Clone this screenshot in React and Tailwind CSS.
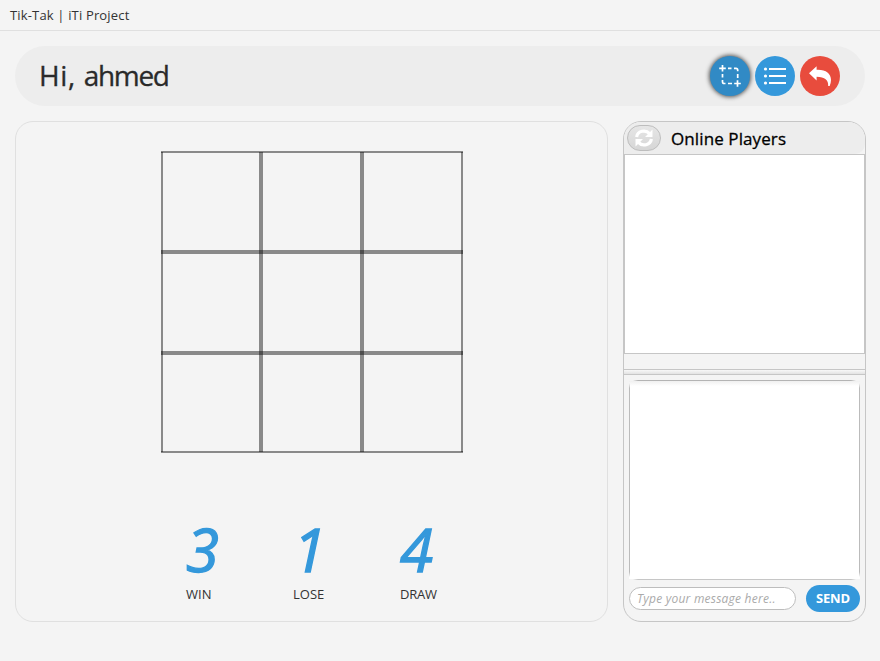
import React from "react";

const FONT = "font-['Trebuchet_MS','Open_Sans','Noto_Sans',sans-serif]";

function Crop() {
  return (
    <svg width="24" height="24" viewBox="0 0 24 24" fill="none" stroke="#fff" strokeWidth="1.7">
      <path d="M4.500 1v6.500M1.200 4.300h6.600M19.500 16.200v6.500M16.200 19.500h6.600" />
      <path d="M10 4.300h3.500M16 4.300h2q1.700 0 1.700 1.700v1.200M19.700 10v4M4.500 10v3.500M4.500 16v1.800q0 1.700 1.700 1.700H7.500M10 19.500h4" />
    </svg>
  );
}

function List() {
  return (
    <svg width="24" height="22" viewBox="0 0 24 22" fill="#fff">
      <circle cx="2.5" cy="4" r="1.6" />
      <circle cx="2.5" cy="11" r="1.6" />
      <circle cx="2.5" cy="18" r="1.6" />
      <path d="M6 3h17v2H6zM6 10h17v2H6zM6 17h17v2H6z" />
    </svg>
  );
}

function Back() {
  return (
    <svg width="24" height="22" viewBox="0 0 24 22" fill="#fff">
      <path d="M1 8.2 8.600 1.200v3.600C17.500 4.300 23 8.500 23 15c0 2-.6 4-1.300 6h-1.500c.3-6-3.200-8.800-11.600-9.200V15.500z" />
    </svg>
  );
}

function Refresh() {
  return (
    <svg width="20" height="20" viewBox="0 0 20 20">
      <g fill="none" stroke="#fff" strokeWidth="3.200">
        <path d="M2.600 9C3.500 3 11.500 1 15.500 5.600" />
        <path d="M17.400 11C16.500 17 8.500 19 4.500 14.400" />
      </g>
      <path d="M18.500 1.500V9H11zM1.500 18.500V11H9z" fill="#fff" />
    </svg>
  );
}

const COLUMNS = [[0, 2], [98, 4], [199, 4], [300, 2]];
const ROWS = [[0, 2], [99, 4], [200, 4], [300, 2]];

function Board() {
  return (
    <svg width="302" height="302" className="block" shapeRendering="crispEdges" fill="#000" fillOpacity=".44">
      {COLUMNS.map(([x, w]) => (
        <rect key={"v" + x} x={x} y="1" width={w} height="300" />
      ))}
      {ROWS.map(([y, h]) => (
        <rect key={"h" + y} x="0" y={y} width="302" height={h} />
      ))}
    </svg>
  );
}

function Stat({ value, label, valueClass, labelClass }) {
  return (
    <div className="flex w-[110px] flex-col items-start">
      <div className={"h-[58px] text-[60px] leading-[58px] italic text-[#3498db] [-webkit-text-stroke:1.3px_#3498db] " + valueClass}>{value}</div>
      <div className={"mt-[7px] text-[13px] leading-[18px] whitespace-nowrap text-[#333] " + labelClass}>{label}</div>
    </div>
  );
}

export default function App() {
  return (
    <div className={"h-[661px] w-[880px] overflow-hidden bg-[#f4f4f4] " + FONT}>
      <div className="h-[31px] border-b border-[#e0e0e0] pl-[10px] text-[13px] leading-[31px] tracking-[0.16px] text-[#333]">
        Tik-Tak | iTi Project
      </div>
      <header className="mx-[15px] mt-[15px] flex h-[60px] items-center justify-between rounded-[30px] bg-[#ededed] pr-[25px] pl-[24px]">
        <h1 className="h-[60px] text-[28px] leading-[59px] text-[#2a2a2a] [-webkit-text-stroke:0.3px_#2a2a2a]">
          <span className="tracking-[0.6px]">Hi, </span>
          <span className="tracking-[-1.3px]">ahmed</span>
        </h1>
        <div className="flex items-center gap-[5px]">
          <button className="flex size-[40px] items-center justify-center rounded-full bg-[#318ac5] shadow-[0_0_4px_1px_#555]">
            <Crop />
          </button>
          <button className="flex size-[40px] items-center justify-center rounded-full bg-[#3498db]">
            <List />
          </button>
          <button className="flex size-[40px] items-center justify-center rounded-full bg-[#e84c3d]">
            <Back />
          </button>
        </div>
      </header>
      <main className="mt-[15px] ml-[15px] flex gap-[15px]">
        <section className="h-[501px] w-[593px] rounded-[18px] border border-[#e0e0e0] pt-[29px] pl-[145px]">
          <Board />
          <div className="mt-[67px] flex pl-[25px]">
            <Stat value="3" label="WIN" valueClass="" labelClass="" />
            <Stat value="1" label="LOSE" valueClass="ml-[-3px]" labelClass="ml-[-3px]" />
            <Stat value="4" label="DRAW" valueClass="ml-[-6px]" labelClass="ml-[-6px] tracking-[-0.2px]" />
          </div>
        </section>
        <aside className="flex h-[501px] w-[243px] flex-col overflow-hidden rounded-[18px] border border-[#c6c6c6]">
          <div className="flex h-[32px] items-center rounded-br-[10px] bg-[#ededed] pl-[3px]">
            <button className="flex h-[26px] w-[34px] items-center justify-center rounded-full border border-[#bdbdbd] bg-linear-to-b from-[#e6e6e6] to-[#d6d6d6]">
              <Refresh />
            </button>
            <h2 className="ml-[10px] h-[32px] text-[17px] leading-[34px] tracking-[0.1px] text-black [-webkit-text-stroke:0.3px_#000]">
              Online Players
            </h2>
          </div>
          <div className="h-[200px] border border-[#c6c6c6] bg-white" />
          <div className="mt-[15px] h-[6px] border-y border-[#c6c6c6] bg-linear-to-b from-[#f8f8f8] to-[#e2e2e2]" />
          <div className="mx-[5px] mt-[5px] h-[200px]">
            <div className="h-px [background-image:linear-gradient(to_right,transparent_4px,#b4b4b4_9px,#b4b4b4_222px,transparent_227px)]" />
            <div className="flex h-[198px] justify-between bg-linear-to-b from-[#f0f0f0] to-white to-[5px]">
              <div className="w-px [background-image:linear-gradient(to_bottom,transparent_2px,#bbb_7px,#bbb_191px,transparent_196px)]" />
              <div className="w-px [background-image:linear-gradient(to_bottom,transparent_2px,#bbb_7px,#bbb_191px,transparent_196px)]" />
            </div>
            <div className="h-px [background-image:linear-gradient(to_right,transparent_4px,#c6c6c6_9px,#c6c6c6_222px,transparent_227px)]" />
          </div>
          <div className="mx-[5px] mt-[5px] flex items-center justify-between">
            <input
              placeholder="Type your message here.."
              className="h-[23px] w-[167px] rounded-full border border-[#bdbdbd] bg-white px-[7px] text-[12px] tracking-[0.23px] italic placeholder:text-[#aaa]"
            />
            <button className="h-[27px] w-[54px] rounded-full bg-[#3498db] text-[13px] leading-[27px] font-bold tracking-[-0.15px] text-white">
              SEND
            </button>
          </div>
        </aside>
      </main>
    </div>
  );
}
